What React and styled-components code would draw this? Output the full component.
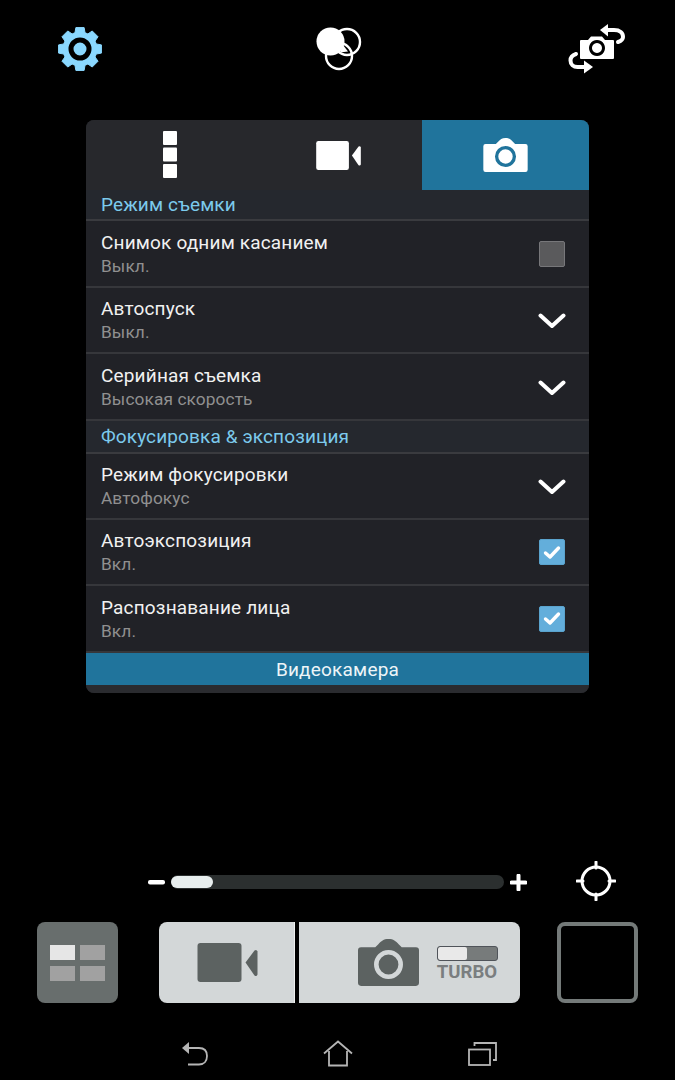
import React from 'react';
import styled, { createGlobalStyle } from 'styled-components';

const GlobalStyle = createGlobalStyle`
  html, body {
    margin: 0;
    padding: 0;
    background: #000;
  }
  body {
    font-family: Roboto, "Liberation Sans", sans-serif;
  }
`;

const Screen = styled.div`
  width: 675px;
  height: 1080px;
  background: #000;
  display: flex;
  flex-direction: column;
  overflow: hidden;
`;

// top icons
const TopBar = styled.div`
  height: 98px;
  padding: 0 47px 0 54px;
  display: flex;
  align-items: center;
  justify-content: space-between;
  flex-shrink: 0;
`;

const Panel = styled.div`
  margin: 22px 0 0 86px;
  width: 503px;
  height: 573px;
  background: #212227;
  border-radius: 8px;
  overflow: hidden;
  flex-shrink: 0;
`;

const Tabs = styled.div`
  height: 70px;
  display: grid;
  grid-template-columns: 168px 168px 167px;
  background: #27282c;
`;

const Tab = styled.div`
  display: flex;
  align-items: center;
  justify-content: center;
  background: ${p => (p.$active ? '#20749c' : 'transparent')};
`;

const SectionHead = styled.div`
  height: ${p => p.$h}px;
  box-sizing: border-box;
  padding: 0 0 1px 15px;
  display: flex;
  align-items: center;
  background: #25282e;
  border-bottom: 2px solid #3a3b3f;
  color: #7ccaec;
  font-size: 19px;
  letter-spacing: 0.12px;
`;

const Row = styled.div`
  height: ${p => p.$h}px;
  box-sizing: border-box;
  padding: 0 23px 0 15px;
  display: flex;
  align-items: center;
  justify-content: space-between;
  border-bottom: 2px solid #36373b;
`;

const RowText = styled.div`
  display: flex;
  flex-direction: column;
  gap: 1px;
`;

const RowTitle = styled.div`
  color: #f1f1f1;
  font-size: 19px;
  line-height: 24px;
  letter-spacing: 0.17px;
`;

const RowValue = styled.div`
  color: #909090;
  font-size: 17.3px;
  line-height: 21px;
  letter-spacing: 0.1px;
`;

const CheckBox = styled.div`
  width: 26px;
  height: 26px;
  margin-right: 1px;
  box-sizing: border-box;
  border-radius: 2px;
  display: flex;
  align-items: center;
  justify-content: center;
  background: ${p => (p.$on ? '#63aedb' : '#5a5a5c')};
  border: 1px solid ${p => (p.$on ? '#5aa3cd' : '#77777a')};
`;

const MoreBar = styled.div`
  height: 32px;
  display: flex;
  align-items: center;
  justify-content: center;
  background: #20749c;
  color: #eef5f8;
  font-size: 19px;
  letter-spacing: 0.2px;
`;

const PanelEnd = styled.div`
  height: 8px;
  background: #2a2b2f;
`;

// zoom slider
const ZoomRow = styled.div`
  margin-top: 176px;
  padding-left: 148px;
  height: 26px;
  display: flex;
  align-items: center;
  flex-shrink: 0;
`;

const ZoomSign = styled.div`
  width: 17px;
  height: 17px;
  flex-shrink: 0;
  display: flex;
  align-items: center;
  justify-content: center;
`;

const Track = styled.div`
  width: 333px;
  height: 14px;
  margin: 0 6px;
  padding-top: 1px;
  box-sizing: border-box;
  border-radius: 7px;
  background: #2b2f2f;
`;

const Thumb = styled.div`
  width: 42px;
  height: 12px;
  border-radius: 6px;
  background: #e8eeee;
`;

const FocusIcon = styled.div`
  margin: 0 0 2px 49px;
  display: flex;
`;

const Controls = styled.div`
  margin-top: 27px;
  padding-left: 37px;
  height: 81px;
  display: flex;
  flex-shrink: 0;
`;

const GridButton = styled.div`
  width: 81px;
  height: 81px;
  border-radius: 8px;
  background: #686e6d;
  display: flex;
  align-items: flex-start;
  justify-content: center;
  padding-top: 23px;
  box-sizing: border-box;
`;

const GridCells = styled.div`
  display: grid;
  grid-template-columns: 25px 25px;
  grid-auto-rows: 15px;
  column-gap: 5px;
  row-gap: 6px;
`;

const GridCell = styled.div`
  background: ${p => (p.$on ? '#e6e6e6' : '#a1a1a1')};
`;

const Shutter = styled.div`
  margin-left: 41px;
  width: 361px;
  height: 81px;
  display: flex;
  gap: 4px;
`;

const VideoPart = styled.div`
  width: 136px;
  border-radius: 8px 0 0 8px;
  border-right: 1px solid #eef0f0;
  background: #d3d7d8;
  display: flex;
  align-items: center;
  justify-content: center;
  padding-left: 2px;
  box-sizing: border-box;
`;

const PhotoPart = styled.div`
  flex: 1;
  border-radius: 0 8px 8px 0;
  background: #d3d7d8;
  display: flex;
  align-items: center;
  padding-left: 59px;
  box-sizing: border-box;
`;

const TurboBox = styled.div`
  margin-left: 17px;
  padding-top: 2px;
  width: 62px;
  display: flex;
  flex-direction: column;
  align-items: center;
`;

const TurboSwitch = styled.div`
  width: 61px;
  height: 15px;
  box-sizing: border-box;
  border: 1px solid #50545a;
  border-radius: 3px;
  background: #777b7b;
  overflow: hidden;
`;

const TurboKnob = styled.div`
  width: 29px;
  height: 100%;
  background: #e9e9e9;
  border-radius: 2px;
`;

const TurboLabel = styled.div`
  color: #7a7e80;
  font-size: 18.6px;
  font-weight: 700;
  line-height: 17px;
  margin-top: 3px;
`;

const Thumbnail = styled.div`
  margin-left: 37px;
  width: 81px;
  height: 81px;
  box-sizing: border-box;
  border: 4px solid #747a79;
  border-radius: 8px;
`;

const NavBar = styled.div`
  margin-top: 37px;
  padding-left: 182px;
  display: flex;
  align-items: center;
  gap: 115px;
  flex-shrink: 0;
`;

const GearIcon = () => {
  const cx = 26;
  const cy = 26;
  let d = '';
  for (let i = 0; i < 8; i++) {
    const a = (i * Math.PI) / 4 - Math.PI / 2;
    const pts = [
      [17, -0.3],
      [21.8, -0.19],
      [21.8, 0.19],
      [17, 0.3],
    ];
    pts.forEach(([r, o]) => {
      const x = cx + r * Math.cos(a + o);
      const y = cy + r * Math.sin(a + o);
      d += `${d ? 'L' : 'M'}${x.toFixed(2)} ${y.toFixed(2)}`;
    });
  }
  return (
    <svg width="52" height="52" viewBox="0 0 52 52">
      <path d={d + 'Z'} fill="#8ad8ff" stroke="#8ad8ff" strokeWidth="1" strokeLinejoin="round" />
      <circle cx={cx} cy={cy} r="9" fill="#8ad8ff" stroke="#000" strokeWidth="5" />
    </svg>
  );
};

const VennIcon = () => (
  <svg width="52" height="50" viewBox="0 0 52 50" style={{ marginLeft: 6 }}>
    <circle cx="33" cy="18" r="13" fill="none" stroke="#fff" strokeWidth="2.400" />
    <circle cx="25" cy="32" r="13" fill="none" stroke="#fff" strokeWidth="2.400" />
    <path d="M29 21l-3 7.500 8-1z" fill="#fff" />
    <circle cx="16.500" cy="17.500" r="14" fill="#fff" />
  </svg>
);

const SwitchCameraIcon = () => (
  <svg width="60" height="50" viewBox="0 0 60 50">
    <path
      fillRule="evenodd"
      d="M13 16h7l3-3.500h11l3 3.500h8a1 1 0 0 1 1 1v17a1 1 0 0 1-1 1H13a1 1 0 0 1-1-1V17a1 1 0 0 1 1-1z M29 16a8 8 0 1 0 .01 0z M29 19a5 5 0 1 1-.01 0z"
      fill="#fff"
    />
    <path d="M38 6h8c6 0 9 3 9 7 0 2-2 4-5 5" fill="none" stroke="#fff" strokeWidth="4" strokeLinecap="round" />
    <path d="M40 0L32 6l8 6.500z" fill="#fff" />
    <path d="M8 30c-3 1-5.500 3.500-5.500 6.500 0 4 3 6.500 7 6.500h8" fill="none" stroke="#fff" strokeWidth="4" strokeLinecap="round" />
    <path d="M16 36.500L25 43l-9 6.500z" fill="#fff" />
  </svg>
);

const CameraGlyph = ({ w, h, body, lens }) => (
  <svg width={w} height={h} viewBox="0 0 60 46">
    <path
      d="M3 8h14l3-3c3-3 5-5 10-5s7 2 10 5l3 3h14a3 3 0 0 1 3 3v32a3 3 0 0 1-3 3H3a3 3 0 0 1-3-3V11a3 3 0 0 1 3-3z"
      fill={body}
    />
    <ellipse cx="30" cy="25" rx="12" ry="12" fill="none" stroke={lens} strokeWidth="4.500" />
  </svg>
);

const VideoGlyph = ({ w, h, color }) => (
  <svg width={w} height={h} viewBox="0 0 60 39">
    <rect x="0" y="0" width="44" height="39" rx="3" fill={color} />
    <path d="M48 19.500l9-12a2 2 0 0 1 3 1v23a2 2 0 0 1-3 1z" fill={color} />
  </svg>
);

const Chevron = () => (
  <svg width="28" height="18" viewBox="0 0 28 18" style={{ marginTop: 2 }}>
    <path d="M2.500 3.500L14 14 25.500 3.500" fill="none" stroke="#fff" strokeWidth="4" strokeLinecap="round" strokeLinejoin="round" />
  </svg>
);

const Check = ({ on }) => (
  <CheckBox $on={on}>
    {on && (
      <svg width="18" height="15" viewBox="0 0 18 15">
        <path d="M2.500 8l4.500 4L15.500 3" fill="none" stroke="#fff" strokeWidth="3.400" strokeLinecap="round" strokeLinejoin="round" />
      </svg>
    )}
  </CheckBox>
);

const DotsIcon = () => (
  <svg width="14" height="47" viewBox="0 0 14 47" style={{ marginBottom: 2 }}>
    <rect x="0" y="0" width="14" height="14" rx="1" fill="#fff" />
    <rect x="0" y="16.500" width="14" height="14" rx="1" fill="#fff" />
    <rect x="0" y="33" width="14" height="14" rx="1" fill="#fff" />
  </svg>
);

const FocusGlyph = () => (
  <svg width="40" height="40" viewBox="0 0 40 40">
    <circle cx="20" cy="20" r="14" fill="none" stroke="#fff" strokeWidth="3" />
    <path d="M20 1v6M20 33v6M1 20h6M33 20h6" stroke="#fff" strokeWidth="3" strokeLinecap="round" />
  </svg>
);

const BackIcon = () => (
  <svg width="26" height="24" viewBox="0 0 26 24">
    <path d="M5 6h12c5 0 8 3 8 8s-3 8.500-8 8.500H6" fill="none" stroke="#b5b5b5" strokeWidth="1.800" />
    <path d="M7 0v12L0 6z" fill="#b5b5b5" />
  </svg>
);

const HomeIcon = () => (
  <svg width="30" height="27" viewBox="0 0 30 27">
    <path d="M1 13.500L15 1.500 29 13.500" fill="none" stroke="#b5b5b5" strokeWidth="1.800" />
    <path d="M6 11v14.500h18V11" fill="none" stroke="#b5b5b5" strokeWidth="1.800" />
  </svg>
);

const RecentsIcon = () => (
  <svg width="29" height="24" viewBox="0 0 29 24">
    <rect x="1" y="7.500" width="21" height="15.500" fill="none" stroke="#b5b5b5" strokeWidth="1.800" />
    <path d="M6.500 4V1h21.500v17H25" fill="none" stroke="#b5b5b5" strokeWidth="1.800" />
  </svg>
);

const shootingRows = [
  { title: 'Снимок одним касанием', value: 'Выкл.', control: 'off', h: 67 },
  { title: 'Автоспуск', value: 'Выкл.', control: 'list', h: 66 },
  { title: 'Серийная съемка', value: 'Высокая скорость', control: 'list', h: 67 },
];

const focusRows = [
  { title: 'Режим фокусировки', value: 'Автофокус', control: 'list', h: 66 },
  { title: 'Автоэкспозиция', value: 'Вкл.', control: 'on', h: 66 },
  { title: 'Распознавание лица', value: 'Вкл.', control: 'on', h: 67 },
];

const SettingRow = ({ title, value, control, h }) => (
  <Row $h={h}>
    <RowText>
      <RowTitle>{title}</RowTitle>
      <RowValue>{value}</RowValue>
    </RowText>
    {control === 'list' ? <Chevron /> : <Check on={control === 'on'} />}
  </Row>
);

const App = () => {
  return (
    <Screen>
      <GlobalStyle />
      <TopBar>
        <GearIcon />
        <VennIcon />
        <SwitchCameraIcon />
      </TopBar>

      <Panel>
        <Tabs>
          <Tab><DotsIcon /></Tab>
          <Tab><VideoGlyph w={45} h={29} color="#fff" /></Tab>
          <Tab $active><CameraGlyph w={45} h={34} body="#fff" lens="#20749c" /></Tab>
        </Tabs>
        <SectionHead $h={31}>Режим съемки</SectionHead>
        {shootingRows.map(r => <SettingRow key={r.title} {...r} />)}
        <SectionHead $h={33}>Фокусировка &amp; экспозиция</SectionHead>
        {focusRows.map(r => <SettingRow key={r.title} {...r} />)}
        <MoreBar>Видеокамера</MoreBar>
        <PanelEnd />
      </Panel>

      <ZoomRow>
        <ZoomSign>
          <svg width="17" height="5" viewBox="0 0 17 5"><rect width="17" height="4.500" rx="2" fill="#fff" /></svg>
        </ZoomSign>
        <Track>
          <Thumb />
        </Track>
        <ZoomSign>
          <svg width="17" height="17" viewBox="0 0 17 17"><path d="M8.500 1.500v14M1.500 8.500h14" stroke="#fff" strokeWidth="4" strokeLinecap="round" /></svg>
        </ZoomSign>
        <FocusIcon><FocusGlyph /></FocusIcon>
      </ZoomRow>

      <Controls>
        <GridButton>
          <GridCells>
            <GridCell $on />
            <GridCell />
            <GridCell />
            <GridCell />
          </GridCells>
        </GridButton>
        <Shutter>
          <VideoPart><VideoGlyph w={61} h={39} color="#5c6261" /></VideoPart>
          <PhotoPart>
            <CameraGlyph w={61} h={47} body="#5c6261" lens="#d3d7d8" />
            <TurboBox>
              <TurboSwitch><TurboKnob /></TurboSwitch>
              <TurboLabel>TURBO</TurboLabel>
            </TurboBox>
          </PhotoPart>
        </Shutter>
        <Thumbnail />
      </Controls>

      <NavBar>
        <BackIcon />
        <HomeIcon />
        <RecentsIcon />
      </NavBar>
    </Screen>
  );
};

export default App;
